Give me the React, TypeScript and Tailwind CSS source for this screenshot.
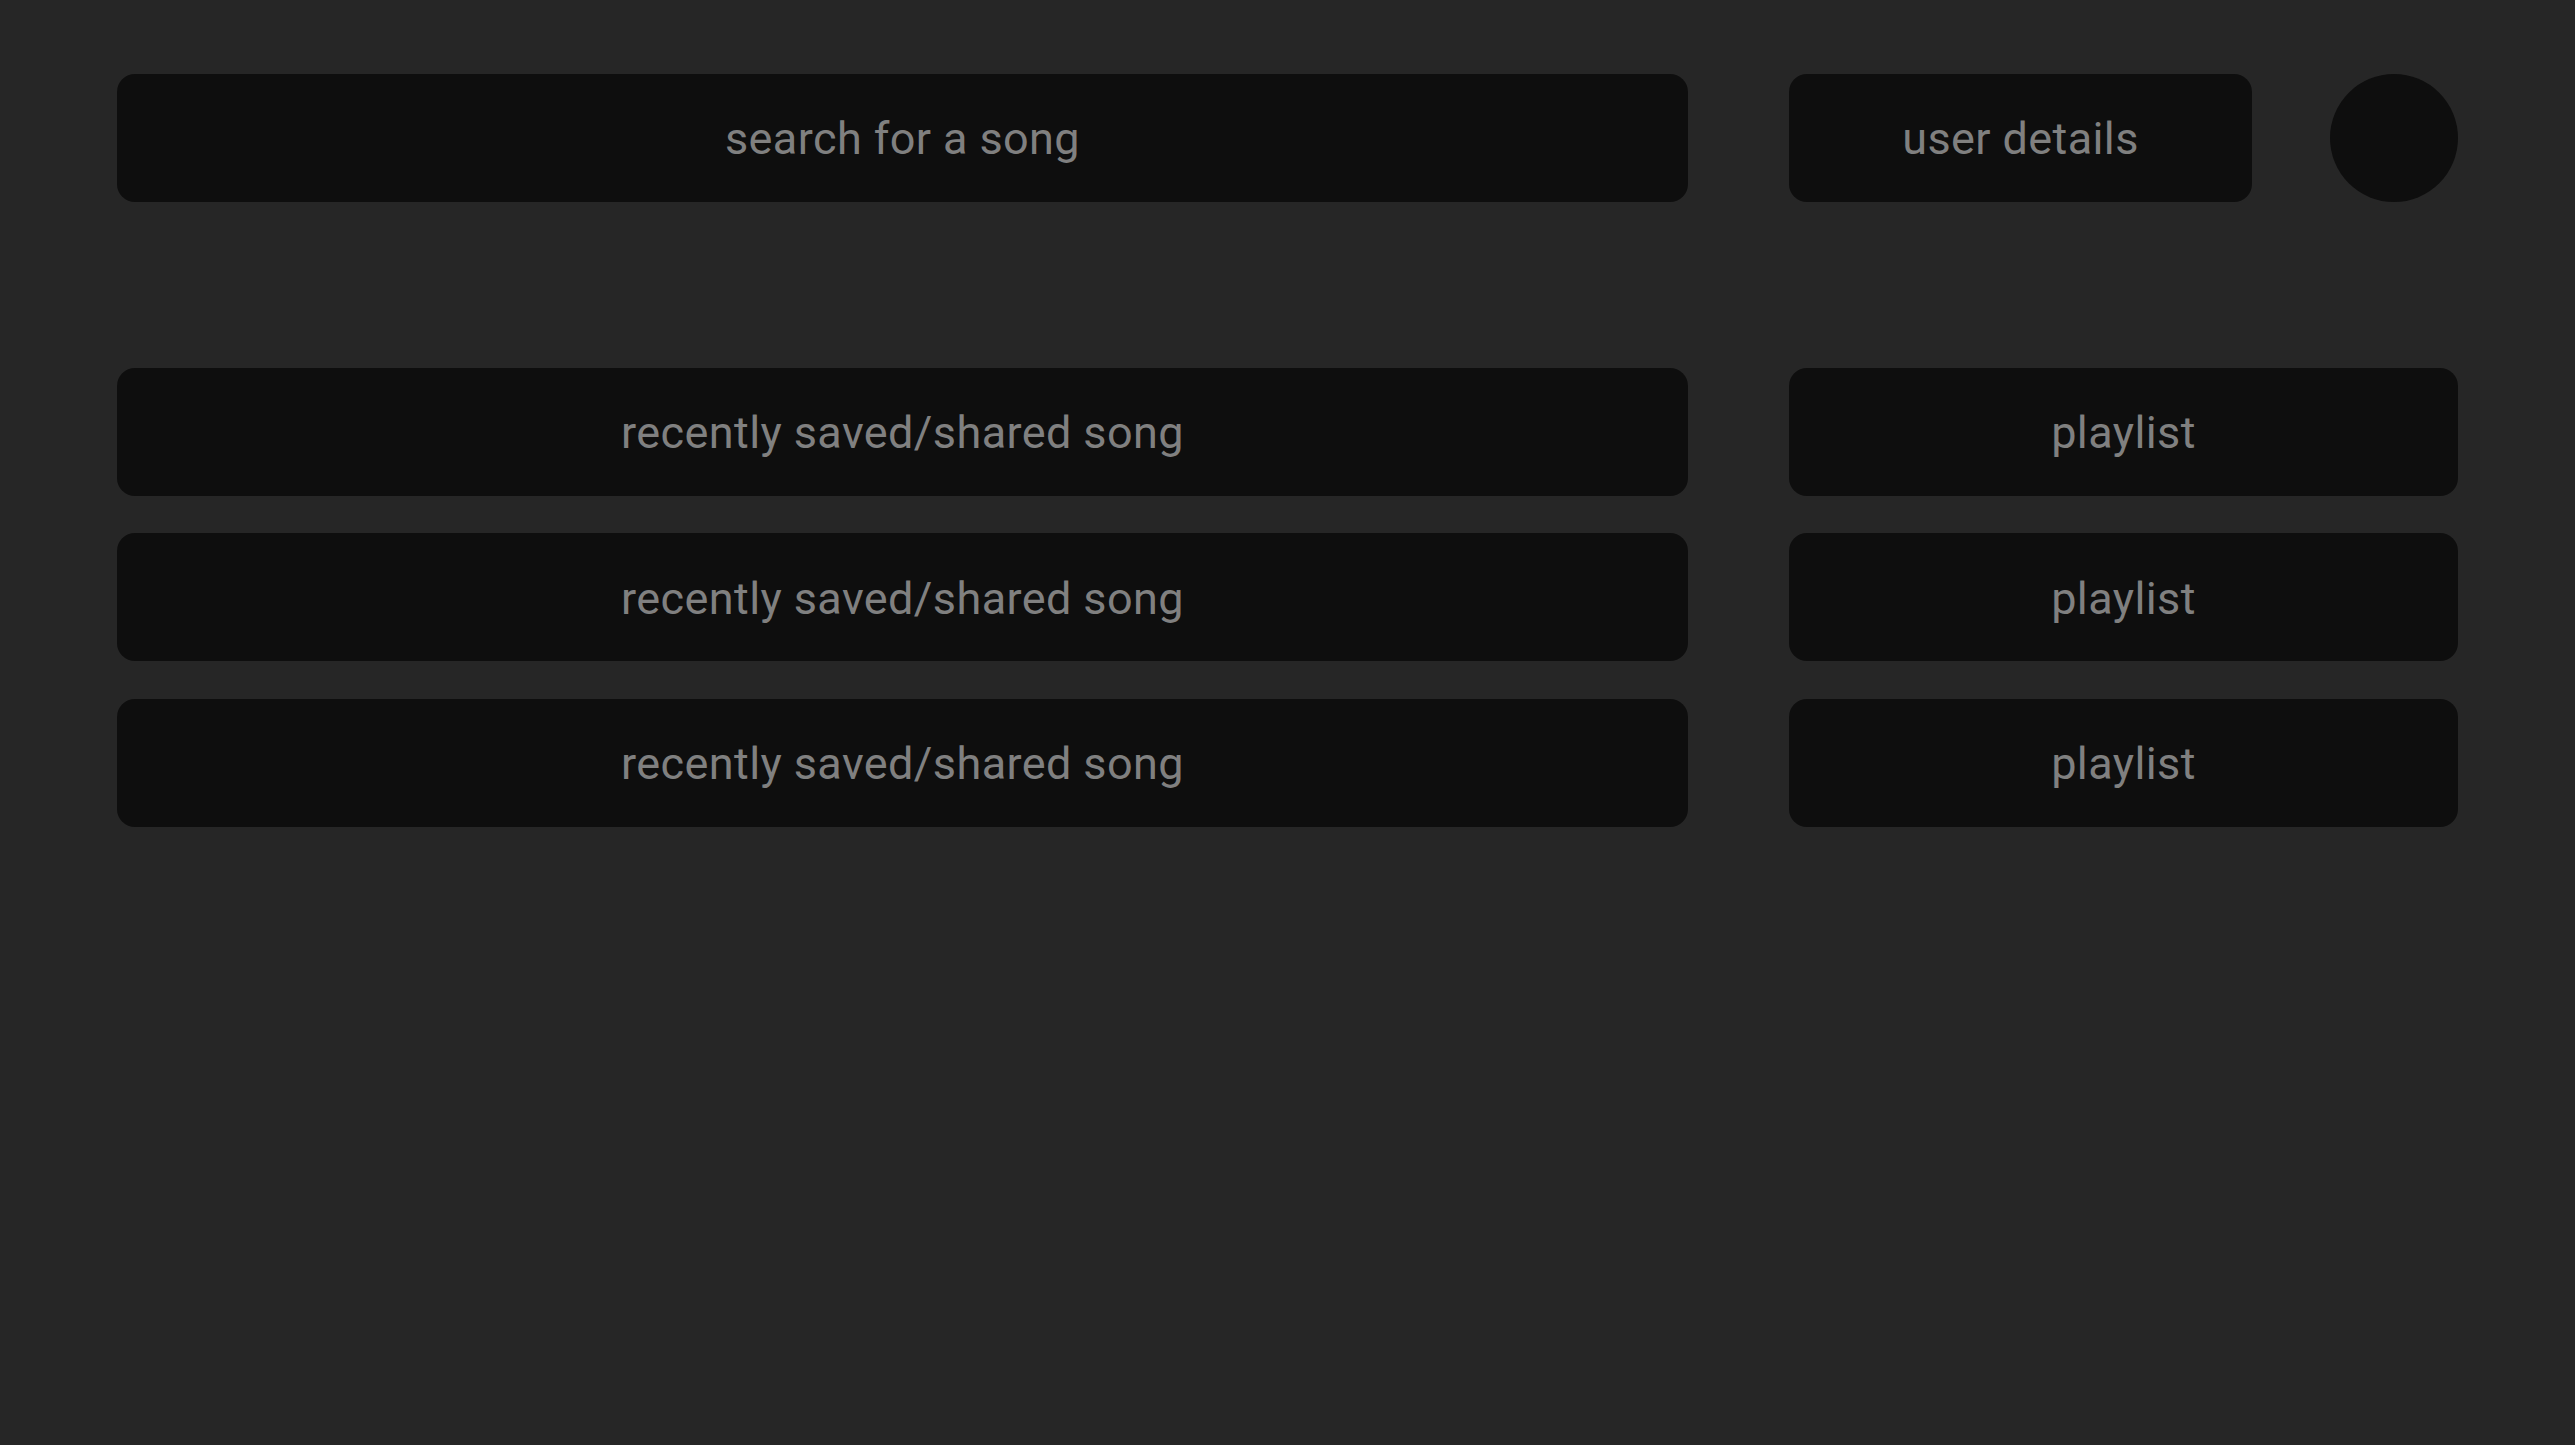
const songs = ['recently saved/shared song', 'recently saved/shared song', 'recently saved/shared song'];
const playlists = ['playlist', 'playlist', 'playlist'];

function Tile({ label }: { label: string }) {
  return (
    <div className="h-[127.7px] flex items-center justify-center rounded-[18px] bg-[#0e0e0e] text-[#808080] text-[45px] pt-[2px] font-['Roboto',sans-serif] tracking-[0.4px]">
      {label}
    </div>
  );
}

export default function App() {
  return (
    <div className="min-h-screen w-full bg-[#262626] px-[117px] pt-[74px] font-['Roboto',sans-serif]">
      <div className="flex gap-[101px]">
        <div className="flex-1">
          <Tile label="search for a song" />
        </div>
        <div className="w-[669px] flex items-center justify-between">
          <div className="w-[463px]">
            <Tile label="user details" />
          </div>
          <div className="w-[127.7px] h-[127.7px] rounded-full bg-[#0e0e0e]" />
        </div>
      </div>

      <div className="mt-[166.3px] flex gap-[101px]">
        <div className="flex-1 flex flex-col gap-[37.8px]">
          {songs.map((s, i) => (
            <Tile key={i} label={s} />
          ))}
        </div>
        <div className="w-[669px] flex flex-col gap-[37.8px]">
          {playlists.map((p, i) => (
            <Tile key={i} label={p} />
          ))}
        </div>
      </div>
    </div>
  );
}
